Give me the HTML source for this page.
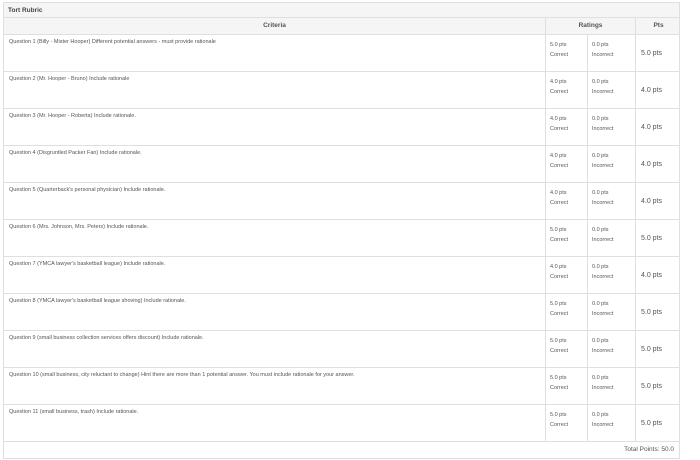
<!DOCTYPE html>
<html><head><style>
body{margin:0;background:#fff;font-family:"Liberation Sans",sans-serif;color:#555;}
.wrap{position:absolute;left:3px;top:2px;width:677px;height:457px;border:1px solid #dde0e3;box-sizing:border-box;overflow:hidden;}
.title{position:absolute;left:0;top:0;width:100%;height:15px;background:#f5f5f5;border-bottom:1px solid #dde0e3;font-size:6.5px;font-weight:bold;color:#444;line-height:15px;padding-left:4px;box-sizing:border-box;}
.row{position:absolute;left:0;width:100%;height:37px;border-bottom:1px solid #dde0e3;box-sizing:border-box;}
.hd{top:15px;height:17px;background:#f5f5f5;font-weight:bold;font-size:6.5px;line-height:16px;}
.cell{position:absolute;top:0;bottom:0;box-sizing:border-box;}
.c{left:0;width:541px;padding:4px 5px;font-size:5.5px;}
.r1{left:541px;width:42px;border-left:1px solid #dde0e3;padding:5px 4px;line-height:10px;font-size:5.5px;}
.r2{left:583px;width:48px;border-left:1px solid #dde0e3;padding:5px 4px;line-height:10px;font-size:5.5px;}
.p{left:631px;width:46px;border-left:1px solid #dde0e3;padding-left:5px;font-size:7px;line-height:37px;}
.hd .cell{text-align:center;padding:0;line-height:16px;font-size:6.5px;}
.tot{position:absolute;left:0;top:439px;width:100%;height:16px;line-height:16px;text-align:right;font-size:6.5px;padding-right:5px;box-sizing:border-box;}
</style></head><body>
<div class="wrap">
<div class="title">Tort Rubric</div>
<div class="row hd"><div class="cell c">Criteria</div><div class="cell" style="left:541px;width:90px;border-left:1px solid #dde0e3">Ratings</div><div class="cell" style="left:631px;width:46px;border-left:1px solid #dde0e3">Pts</div></div>
<div class="row" style="top:32px"><div class="cell c">Question 1 (Billy - Mister Hooper) Different potential answers - must provide rationale</div><div class="cell r1">5.0 pts<br>Correct</div><div class="cell r2">0.0 pts<br>Incorrect</div><div class="cell p">5.0 pts</div></div>
<div class="row" style="top:69px"><div class="cell c">Question 2 (Mr. Hooper - Bruno) Include rationale</div><div class="cell r1">4.0 pts<br>Correct</div><div class="cell r2">0.0 pts<br>Incorrect</div><div class="cell p">4.0 pts</div></div>
<div class="row" style="top:106px"><div class="cell c">Question 3 (Mr. Hooper - Roberta) Include rationale.</div><div class="cell r1">4.0 pts<br>Correct</div><div class="cell r2">0.0 pts<br>Incorrect</div><div class="cell p">4.0 pts</div></div>
<div class="row" style="top:143px"><div class="cell c">Question 4 (Disgruntled Packer Fan) Include rationale.</div><div class="cell r1">4.0 pts<br>Correct</div><div class="cell r2">0.0 pts<br>Incorrect</div><div class="cell p">4.0 pts</div></div>
<div class="row" style="top:180px"><div class="cell c">Question 5 (Quarterback's personal physician) Include rationale.</div><div class="cell r1">4.0 pts<br>Correct</div><div class="cell r2">0.0 pts<br>Incorrect</div><div class="cell p">4.0 pts</div></div>
<div class="row" style="top:217px"><div class="cell c">Question 6 (Mrs. Johnson, Mrs. Peters) Include rationale.</div><div class="cell r1">5.0 pts<br>Correct</div><div class="cell r2">0.0 pts<br>Incorrect</div><div class="cell p">5.0 pts</div></div>
<div class="row" style="top:254px"><div class="cell c">Question 7 (YMCA lawyer's basketball league) Include rationale.</div><div class="cell r1">4.0 pts<br>Correct</div><div class="cell r2">0.0 pts<br>Incorrect</div><div class="cell p">4.0 pts</div></div>
<div class="row" style="top:291px"><div class="cell c">Question 8 (YMCA lawyer's basketball league shoving) Include rationale.</div><div class="cell r1">5.0 pts<br>Correct</div><div class="cell r2">0.0 pts<br>Incorrect</div><div class="cell p">5.0 pts</div></div>
<div class="row" style="top:328px"><div class="cell c">Question 9 (small business collection services offers discount) Include rationale.</div><div class="cell r1">5.0 pts<br>Correct</div><div class="cell r2">0.0 pts<br>Incorrect</div><div class="cell p">5.0 pts</div></div>
<div class="row" style="top:365px"><div class="cell c">Question 10 (small business, city reluctant to change) Hint there are more than 1 potential answer. You must include rationale for your answer.</div><div class="cell r1">5.0 pts<br>Correct</div><div class="cell r2">0.0 pts<br>Incorrect</div><div class="cell p">5.0 pts</div></div>
<div class="row" style="top:402px"><div class="cell c">Question 11 (small business, trash) Include rationale.</div><div class="cell r1">5.0 pts<br>Correct</div><div class="cell r2">0.0 pts<br>Incorrect</div><div class="cell p">5.0 pts</div></div>
<div class="tot">Total Points: 50.0</div>
</div>
</body></html>
